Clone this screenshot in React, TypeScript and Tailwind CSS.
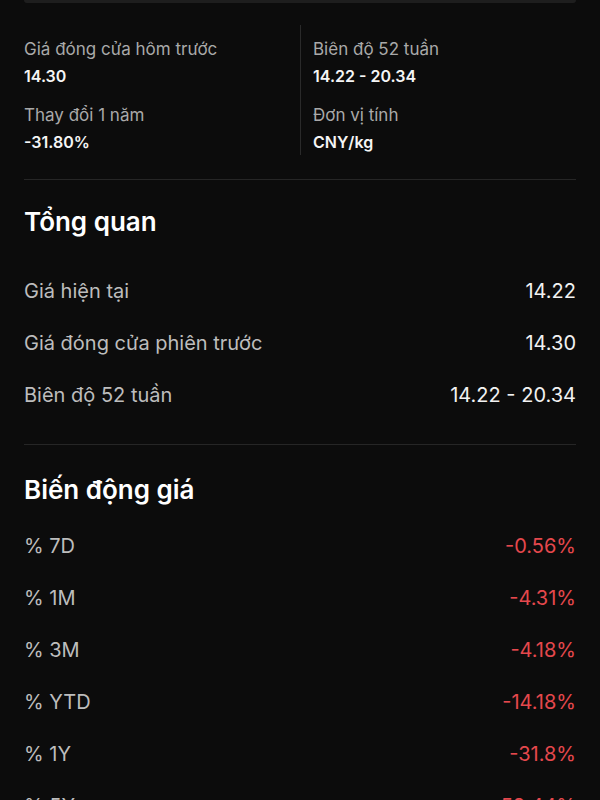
const stats = [
  [
    { label: "Giá đóng cửa hôm trước", value: "14.30" },
    { label: "Thay đổi 1 năm", value: "-31.80%" },
  ],
  [
    { label: "Biên độ 52 tuần", value: "14.22 - 20.34" },
    { label: "Đơn vị tính", value: "CNY/kg" },
  ],
];

const overview = [
  { label: "Giá hiện tại", value: "14.22" },
  { label: "Giá đóng cửa phiên trước", value: "14.30" },
  { label: "Biên độ 52 tuần", value: "14.22 - 20.34" },
];

const changes = [
  { label: "% 7D", value: "-0.56%" },
  { label: "% 1M", value: "-4.31%" },
  { label: "% 3M", value: "-4.18%" },
  { label: "% YTD", value: "-14.18%" },
  { label: "% 1Y", value: "-31.8%" },
  { label: "% 5Y", value: "-53.44%" },
];

function Row({ label, value, red }: { label: string; value: string; red?: boolean }) {
  return (
    <div className="flex h-[52px] items-center justify-between text-[20px] leading-7">
      <span className="text-[#bdbdbd]">{label}</span>
      <span className={red ? "text-[#e5484d]" : "text-[#f2f2f2]"}>{value}</span>
    </div>
  );
}

export default function App() {
  return (
    <div
      className="h-[800px] overflow-hidden bg-[#0c0c0c] px-6"
      style={{ fontFamily: "Inter, 'Noto Sans', sans-serif" }}
    >
      {/* bottom edge of the chart card above */}
      <div className="h-[3px] rounded-b bg-[#1e1e1e]" />

      {/* Quick stats */}
      <div className="mt-[22px] grid grid-cols-2">
        {stats.map((col, i) => (
          <div
            key={i}
            className={`flex h-[130px] flex-col gap-[15px] pt-3 ${
              i === 1 ? "border-l border-[#2a2a2a] pl-3" : ""
            }`}
          >
            {col.map((s) => (
              <div key={s.label} className="flex flex-col gap-[3px] leading-6">
                <span className="text-[17px] text-[#a9a9a9]">{s.label}</span>
                <span className="text-[16px] font-semibold text-[#f5f5f5]">{s.value}</span>
              </div>
            ))}
          </div>
        ))}
      </div>

      <div className="mt-6 h-px bg-[#262626]" />

      {/* Tổng quan */}
      <h2 className="mt-[26px] text-[26px] leading-8 font-semibold text-white">Tổng quan</h2>
      <div className="mt-[27px]">
        {overview.map((r) => (
          <Row key={r.label} {...r} />
        ))}
      </div>

      <div className="mt-[23px] h-px bg-[#262626]" />

      {/* Biến động giá */}
      <h2 className="mt-[29px] text-[26px] leading-8 font-semibold text-white">Biến động giá</h2>
      <div className="mt-[14px]">
        {changes.map((r) => (
          <Row key={r.label} {...r} red />
        ))}
      </div>
    </div>
  );
}
